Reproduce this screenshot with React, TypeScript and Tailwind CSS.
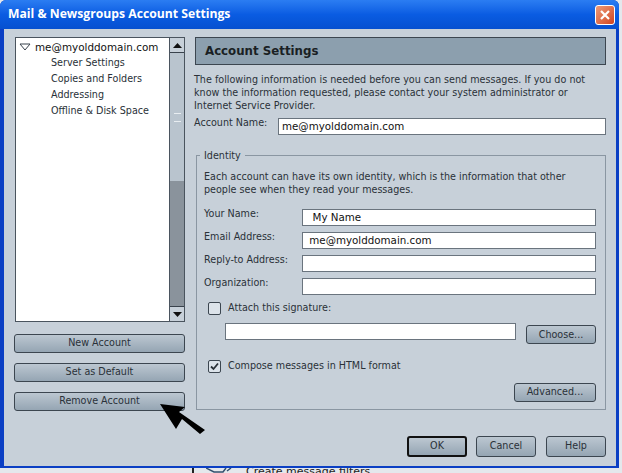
import React from "react";

const font = "font-['DejaVu_Sans',sans-serif]";

const Btn = ({ label, className = "" }: { label: string; className?: string }) => (
  <div
    className={`flex items-center justify-center h-[19px] rounded-[3px] border border-[#3c4650] bg-gradient-to-b from-[#bcc7d1] to-[#95a5b3] text-[9.6px] text-[#2a3138] ${className}`}
  >
    {label}
  </div>
);

const Field = ({ value, className = "" }: { value?: string; className?: string }) => (
  <div
    className={`flex items-center h-[17px] bg-white border border-[#6a747e] text-[10.3px] text-[#111] pl-[3px] ${className}`}
  >
    {value}
  </div>
);

const Row = ({ label, value, marginTop }: { label: string; value?: string; marginTop: string }) => (
  <div className={`flex items-center ${marginTop}`}>
    <div className="w-[98px] text-[9.6px] text-[#2a3138] -mt-[6px]">{label}</div>
    <Field value={value} className="w-[294px]" />
  </div>
);

const Check = ({ checked }: { checked?: boolean }) => (
  <div className="flex items-center justify-center w-[13px] h-[13px] rounded-[2px] border border-[#3c4650] bg-[#dce3ea]">
    {checked && (
      <svg width="9" height="9" viewBox="0 0 9 9">
        <path d="M1 4.5 L3.5 7 L8 1.5" fill="none" stroke="#2a3138" strokeWidth="1.8" />
      </svg>
    )}
  </div>
);

export default function App() {
  return (
    <div className={`relative w-[622px] h-[473px] overflow-hidden bg-[#e4e8ec] ${font}`}>
      {/* window */}
      <div className="w-[619px] h-[468px] flex flex-col bg-[#0b3fc4] rounded-t-[6px]">
        <div className="flex items-center justify-between h-[29px] pl-[8px] pr-[4px] rounded-t-[6px] bg-gradient-to-b from-[#2b7df2] via-[#0a5ce2] to-[#0650d0]">
          <span className="font-['Open_Sans',sans-serif] font-bold text-[12.2px] text-white">
            Mail &amp; Newsgroups Account Settings
          </span>
          <div className="flex items-center justify-center w-[20px] h-[20px] rounded-[3px] border border-white bg-gradient-to-br from-[#ec9a78] to-[#d0421c]">
            <svg width="12" height="12" viewBox="0 0 12 12">
              <path d="M2 2 L10 10 M10 2 L2 10" stroke="white" strokeWidth="2.2" />
            </svg>
          </div>
        </div>

        {/* body */}
        <div className="flex-1 flex flex-col ml-[4px] mr-[3px] mb-[2px] bg-[#c7d0d9] pl-[10px] pr-[10px] pt-[8px]">
          <div className="flex">
            {/* left column */}
            <div className="w-[171px] flex flex-col">
              <div className="flex h-[285px] ml-[1px] border border-[#4a545e]">
                <div className="flex-1 bg-white pl-[3px] pt-[1px] text-[9.6px] leading-[16px] text-[#2a3138]">
                  <div className="flex items-center gap-[4px] text-[#111] text-[10.4px]">
                    <svg width="12" height="8" viewBox="0 0 12 8">
                      <path d="M1 1 H11 L6 7 Z" fill="white" stroke="#39424c" />
                    </svg>
                    me@myolddomain.com
                  </div>
                  <div className="pl-[32px]">
                    <div>Server Settings</div>
                    <div>Copies and Folders</div>
                    <div>Addressing</div>
                    <div>Offline &amp; Disk Space</div>
                  </div>
                </div>
                <div className="w-[15px] flex flex-col bg-[#8f9aa5] border-l border-[#4a545e]">
                  <div className="flex items-center justify-center h-[15px] bg-[#c7d0d9] border-b border-[#39424c]">
                    <svg width="9" height="5" viewBox="0 0 9 5"><path d="M4.5 0 L9 5 H0 Z" fill="#111" /></svg>
                  </div>
                  <div className="h-[128px] bg-[#b9c4ce] flex items-center justify-center">
                    <div className="w-[7px] h-[9px] border-y border-[#e8edf1]" />
                  </div>
                  <div className="flex-1 bg-[#8a939c]" />
                  <div className="flex items-center justify-center h-[15px] bg-[#c7d0d9] border-t border-[#39424c]">
                    <svg width="9" height="5" viewBox="0 0 9 5"><path d="M0 0 H9 L4.5 5 Z" fill="#111" /></svg>
                  </div>
                </div>
              </div>
              <div className="flex flex-col gap-[10px] mt-[12px]">
                <Btn label="New Account" />
                <Btn label="Set as Default" />
                <Btn label="Remove Account" />
              </div>
            </div>

            {/* right column */}
            <div className="w-[411px] ml-[10px] flex flex-col">
              <div className="flex items-center h-[28px] pl-[9px] pt-[2px] bg-[#8c9fae] border border-[#3c4650] font-bold text-[11.8px] text-[#1a1f24]">
                Account Settings
              </div>
              <p className="mt-[8px] -ml-[1px] text-[9.6px] leading-[13px] text-[#2a3138]">
                The following information is needed before you can send messages. If you do not
                know the information requested, please contact your system administrator or
                Internet Service Provider.
              </p>
              <div className="flex items-center mt-[6px] -ml-[1px]">
                <div className="w-[84px] text-[9.6px] text-[#2a3138] -mt-[6px]">Account Name:</div>
                <Field value="me@myolddomain.com" className="w-[328px]" />
              </div>

              {/* identity group */}
              <div className="relative mt-[20px] h-[255px] ml-[1px] border border-[#8a96a2] px-[7px] pt-[14px]">
                <span className="absolute -top-[7px] left-[3px] px-[4px] bg-[#c7d0d9] text-[9.6px] text-[#2a3138]">
                  Identity
                </span>
                <p className="text-[9.6px] leading-[13px] text-[#2a3138]">
                  Each account can have its own identity, which is the information that other
                  people see when they read your messages.
                </p>
                <Row label="Your Name:" value={"\u00a0\u00a0My Name"} marginTop="mt-[13px]" />
                <Row label="Email Address:" value={"\u00a0me@myolddomain.com"} marginTop="mt-[6px]" />
                <Row label="Reply-to Address:" marginTop="mt-[6px]" />
                <Row label="Organization:" marginTop="mt-[6px]" />
                <div className="flex items-center gap-[7px] mt-[6px] ml-[4px] text-[9.6px] text-[#2a3138]">
                  <Check />
                  Attach this signature:
                </div>
                <div className="flex items-start mt-[8px] ml-[21px]">
                  <Field className="w-[291px]" />
                  <Btn label="Choose..." className="w-[70px] ml-[10px] mt-[2px]" />
                </div>
                <div className="flex items-center gap-[7px] mt-[15px] ml-[4px] text-[9.6px] text-[#2a3138]">
                  <Check checked />
                  Compose messages in HTML format
                </div>
                <div className="flex justify-end mt-[9px] mr-[2px]">
                  <Btn label="Advanced..." className="w-[82px]" />
                </div>
              </div>
            </div>
          </div>

          {/* bottom buttons */}
          <div className="flex justify-end gap-[10px] mt-[25px]">
            <Btn label="OK" className="w-[60px] h-[21px] -mr-[1px] border-2 border-[#111]" />
            <Btn label="Cancel" className="w-[60px] h-[21px]" />
            <Btn label="Help" className="w-[60px] h-[21px]" />
          </div>
        </div>
      </div>

      {/* part of the window behind */}
      <div className="flex ml-[192px] h-[5px] overflow-hidden border-l-2 border-[#222] pl-[12px] text-[11px] leading-[11px] text-[#222]">
        <svg width="26" height="5" viewBox="0 0 26 5" className="shrink-0 mr-[14px]">
          <path d="M0 0 L8 4 H17 L20 0 M21 3 L25 0" fill="none" stroke="#33506e" strokeWidth="1.5" />
        </svg>
        <div className="-mt-[2px]">Create message filters</div>
      </div>

      {/* annotation arrow */}
      <svg className="absolute left-[158px] top-[400px]" width="50" height="38" viewBox="0 0 50 38">
        <path d="M2 4 L27 7 L21 12 L47 30 L42 34 L24 19 L18 29 Z" fill="#000" />
      </svg>
    </div>
  );
}
